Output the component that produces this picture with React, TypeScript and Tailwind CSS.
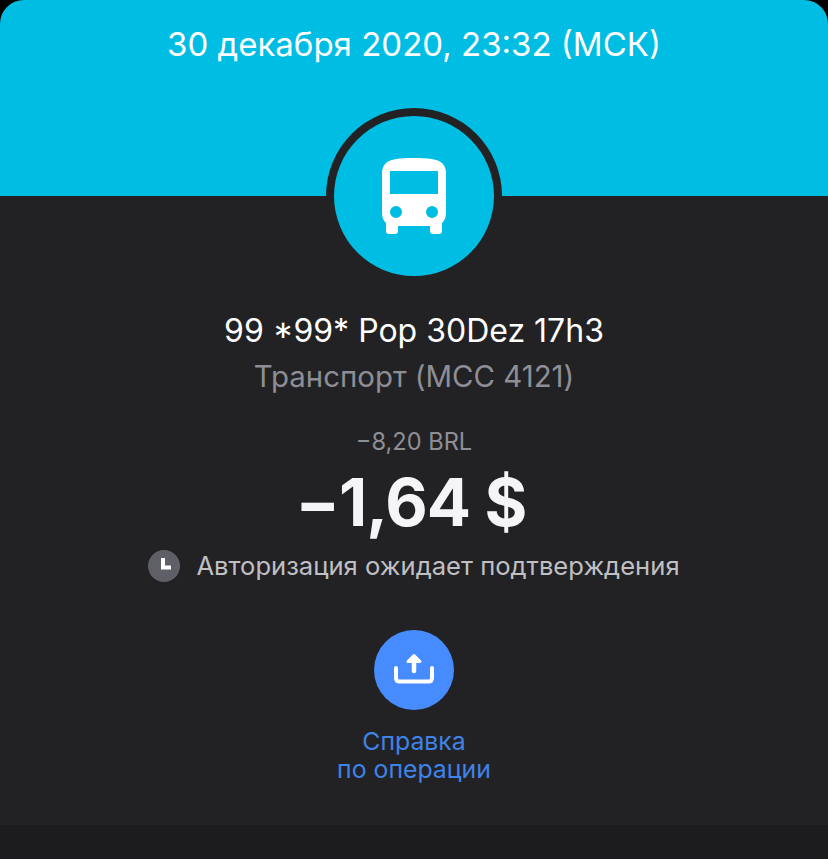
export default function App() {
  return (
    <div className="flex h-[859px] w-[828px] flex-col overflow-hidden bg-black font-['Inter',sans-serif]">
      <div className="flex h-[825px] flex-col items-center overflow-hidden rounded-t-[24px] bg-[#222224]">
        {/* Header */}
        <div className="flex h-[196px] w-full shrink-0 justify-center bg-[#00bde3] pt-[22px]">
          <p className="text-[33px] leading-[44px] text-white">30 декабря 2020, 23:32 (МСК)</p>
        </div>

        {/* Category icon */}
        <div className="-mt-[88px] flex h-[176px] w-[176px] shrink-0 items-center justify-center rounded-full bg-[#222224]">
          <div className="flex h-[160px] w-[160px] items-center justify-center rounded-full bg-[#00bde3]">
            <svg width="66" height="78" viewBox="0 0 66 78" fill="white">
              <path
                fillRule="evenodd"
                d="M33 1C47 1 57 2 61 6C64 9 65 12 65 16V56C65 61 63 64 61 66V74C61 76 60 77 58 77H52C50 77 49 76 49 74V69H17V74C17 76 16 77 14 77H8C6 77 5 76 5 74V66C3 64 1 61 1 56V16C1 12 2 9 5 6C9 2 19 1 33 1ZM9 14V37H57V14H9ZM15 49A6 6 0 1 0 15 61A6 6 0 1 0 15 49ZM51 49A6 6 0 1 0 51 61A6 6 0 1 0 51 49Z"
              />
            </svg>
          </div>
        </div>

        {/* Merchant */}
        <p className="mt-[27px] text-[32px] leading-[40px] text-white">99 *99* Pop 30Dez 17h3</p>
        <p className="mt-[8px] text-[29.4px] leading-[36px] text-[#8e8e96]">Транспорт (MCC 4121)</p>

        {/* Amounts */}
        <p className="mt-[32px] text-[23.6px] leading-[30px] text-[#8e8e96]">−8,20 BRL</p>
        <p className="mt-[12px] pr-[6px] text-[65.5px] leading-[68px] font-bold tracking-[-1px] text-[#f5f5f7]">−1,64 $</p>
        <div className="mt-[13px] flex items-center gap-[16px]">
          <svg width="32" height="32" viewBox="0 0 32 32">
            <circle cx="16" cy="16" r="16" fill="#5f5f67" />
            <path d="M15 8V17.500H23" fill="none" stroke="white" strokeWidth="4" />
          </svg>
          <p className="text-[25.6px] leading-[32px] text-[#c0c0c4]">Авторизация ожидает подтверждения</p>
        </div>

        {/* Action */}
        <div className="mt-[48px] flex h-[80px] w-[80px] shrink-0 items-center justify-center rounded-full bg-[#468cff]">
          <svg width="42" height="34" viewBox="0 0 42 34" fill="none" stroke="white" strokeLinecap="round">
            <path d="M3 15V25C3 27.500 4 28.500 6.500 28.500H35.500C38 28.500 39 27.500 39 25V15" strokeWidth="4" />
            <path d="M21 18V6" strokeWidth="4.500" />
            <path d="M15 8.500L21 2.500L27 8.500Z" fill="white" strokeWidth="3" strokeLinejoin="round" />
          </svg>
        </div>
        <p className="mt-[17px] text-center text-[24.8px] leading-[28px] text-[#3f82e8]">
          Справка
          <br />
          по операции
        </p>
      </div>
      <div className="flex-1 bg-[#1c1c1e]" />
    </div>
  );
}
